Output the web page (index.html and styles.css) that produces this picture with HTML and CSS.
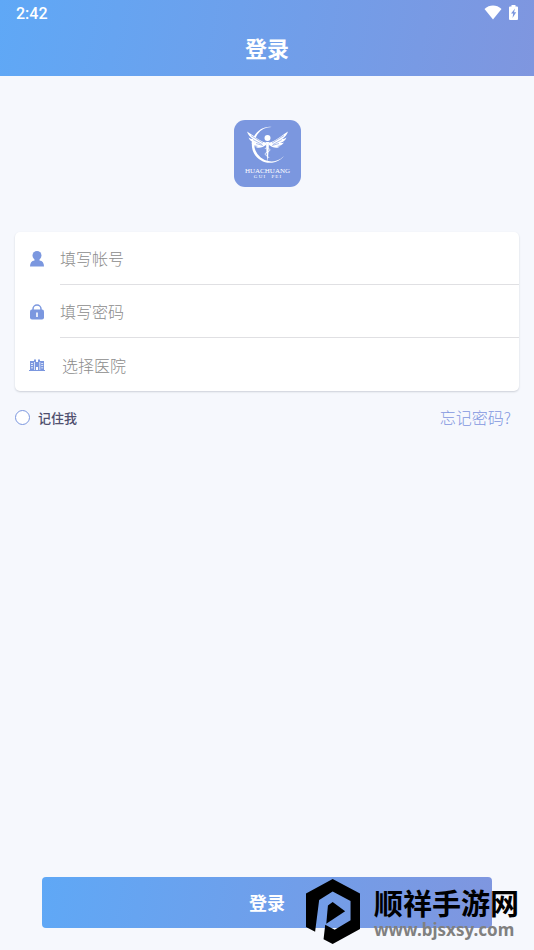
FILE: index.html
```html
<!DOCTYPE html>
<html lang="zh-CN">
<head>
    <meta charset="UTF-8">
    <meta name="viewport" content="width=device-width, initial-scale=1.0">
    <title>登录</title>
    <link rel="stylesheet" href="styles.css">
</head>
<body>

<header class="header">
    <div class="status-bar">
        <span class="clock">2:42</span>
        <svg class="wifi" viewBox="0 0 18 15" aria-hidden="true">
            <path d="M0.5 4C3 1.6 6 0.5 9 0.5S15 1.6 17.5 4L9 14.5Z" fill="#fff"/>
        </svg>
        <svg class="battery" viewBox="0 0 9 15" aria-hidden="true">
            <path d="M2.5 0h4v1.5H8a1 1 0 0 1 1 1V14a1 1 0 0 1-1 1H1a1 1 0 0 1-1-1V2.5a1 1 0 0 1 1-1h1.5Z" fill="#fff"/>
            <path d="M6 3.5 2 8.6h2.2L3.5 13 7.2 7.2H5Z" fill="#7b97df"/>
        </svg>
    </div>
    <h1 class="title">登录</h1>
</header>

<form class="login">
    <svg class="logo" viewBox="0 0 67 67" role="img" aria-label="HUACHUANG GUI PEI">
        <rect width="67" height="67" rx="11" fill="#7b97df"/>
        <path d="M38 7A18 18 0 1 0 50 36A17.2 17.2 0 1 1 38 7Z" fill="#fff"/>
        <g fill="#fff">
            <circle cx="33.5" cy="18" r="3"/>
            <path d="M32 22.5C27 22 23 18 13 11.5C14 15 16 17 19 19C17.5 19 16 18.5 14.5 17.5C15.5 20.5 18 22 21 23C19.5 23.3 18.5 23 17 22.5C18.5 25 21 26 24 26C23 26.5 22 26.5 21 26.5C24 29 29 27.5 32 25Z"/>
            <path d="M35 22.5C40 22 44 18 54 11.5C53 15 51 17 48 19C49.5 19 51 18.5 52.5 17.5C51.5 20.5 49 22 46 23C47.5 23.3 48.5 23 50 22.5C48.5 25 46 26 43 26C44 26.5 45 26.5 46 26.5C43 29 38 27.5 35 25Z"/>
            <path d="M32 22h3l-.5 10-1 10-1-10Z"/>
        </g>
        <g stroke="#7b97df" stroke-width=".6" fill="none">
            <path d="M17 15.5 29 23M19 19.5l9 5M22 23.5l7 2M50 15.5 38 23M48 19.5l-9 5M45 23.5l-7 2"/>
        </g>
        <path d="M31 29c0-2 5-1 5 1s-5 2-5 4 4 2 4 4" fill="none" stroke="#fff" stroke-width=".7"/>
        <text class="logo-name" x="33.5" y="53" text-anchor="middle">HUACHUANG</text>
        <text class="logo-sub" x="33.5" y="58" text-anchor="middle">G U I &#160; &#160; P E I</text>
    </svg>

    <div class="card">
        <div class="row">
            <label class="icon" for="account" aria-label="帐号">
                <svg viewBox="0 0 16 16">
                    <circle cx="8" cy="4.5" r="4.5"/>
                    <path d="M5.5 8h5v1.5c3 .4 4.5 2.5 4.5 6H1c0-3.5 1.5-5.6 4.5-6Z"/>
                </svg>
            </label>
            <input id="account" class="field" type="text" placeholder="填写帐号">
        </div>
        <div class="row">
            <label class="icon" for="password" aria-label="密码">
                <svg viewBox="0 0 16 16">
                    <path d="M4 7V5a4 4 0 0 1 8 0v2" fill="none" stroke="#7b97df" stroke-width="1.5"/>
                    <rect x="1" y="5.5" width="14" height="10" rx="2"/>
                    <path d="M7.2 8.5h1.6V13H7.2Z" fill="#fff"/>
                </svg>
            </label>
            <input id="password" class="field" type="password" placeholder="填写密码">
        </div>
        <div class="row">
            <label class="icon" for="hospital" aria-label="医院">
                <svg viewBox="0 0 16 16">
                    <path d="M1 4h4V2.5h2V5h2V2.5h2V4h4v9h1v1H0v-1h1Z"/>
                    <path d="M5 5h.7v8H5ZM10.500 5h.7v8h-.7ZM7 10h2v3H7ZM2 6h2v.7H2ZM2 8.2h2v.7H2ZM2 10.5h2v.7H2ZM12.2 6h2v.7h-2ZM12.2 8.2h2v.7h-2ZM12.2 10.5h2v.7h-2Z" fill="#fff"/>
                </svg>
            </label>
            <select id="hospital" class="field picker">
                <option>选择医院</option>
            </select>
        </div>
    </div>

    <div class="options">
        <label class="remember">
            <input class="check" type="checkbox">
            <span>记住我</span>
        </label>
        <a class="forgot" href="#">忘记密码?</a>
    </div>

    <button class="submit" type="submit">登录</button>
</form>

<aside class="watermark">
    <svg class="mark" viewBox="0 0 160 192" aria-hidden="true">
        <path d="M79 0 160 43V148L79 192 52 178 57 135 85 150 132 122V65L79 37 39 62 27 156 0 142V43Z" fill="#000"/>
        <path d="M65 78 79 68 116 95 60 132Z" fill="#000"/>
    </svg>
    <div class="mark-text">
        <div class="mark-name">顺祥手游网</div>
        <div class="mark-url">www.bjsxsy.com</div>
    </div>
</aside>

</body>
</html>
```
FILE: styles.css
```css
* {
    box-sizing: border-box;
}
body {
    margin: 0;
    min-height: 100vh;
    display: flex;
    flex-direction: column;
    background-color: #f6f8fd;
    font-family: "Noto Sans CJK SC", sans-serif;
}
.header {
    height: 76px;
    background: linear-gradient(100deg, #5fa8f6, #7f96df);
    color: #fff;
}
.status-bar {
    display: flex;
    align-items: center;
    height: 25px;
    padding: 0 16px;
}
.clock {
    flex: 1;
    padding-top: 3px;
    font: 500 16px/24px Roboto, sans-serif;
}
.wifi {
    width: 18px;
    height: 15px;
    margin-right: 7px;
}
.battery {
    width: 9px;
    height: 15px;
}
.title {
    margin: 0;
    text-align: center;
    font-size: 22px;
    line-height: 44px;
    font-weight: 700;
}
.login {
    flex: 1;
    display: flex;
    flex-direction: column;
    padding: 44px 15px 22px;
}
.logo {
    width: 67px;
    height: 67px;
    align-self: center;
    margin-bottom: 45px;
}
.logo-name {
    font: 7px "Liberation Serif", serif;
    fill: #fff;
}
.logo-sub {
    font: 5px "Liberation Serif", serif;
    fill: #fff;
}
.card {
    border-radius: 5px;
    background-color: #fff;
    box-shadow: 0 1px 2px #ccd0d8;
}
.row {
    display: flex;
    align-items: center;
    padding-left: 14px;
}
.icon {
    width: 16px;
    height: 16px;
    margin-right: 15px;
}
.icon svg {
    display: block;
    fill: #7b97df;
}
.field {
    flex: 1;
    min-width: 0;
    height: 53px;
    padding: 0;
    border: 0;
    border-bottom: 1px solid #e0e0e3;
    background: none;
    color: #8c8c8c;
    font: 300 16px "Noto Sans CJK SC", sans-serif;
    outline: none;
}
.field::placeholder {
    color: #8c8c8c;
}
.picker {
    padding-left: 2px;
    border-bottom: 0;
    appearance: none;
}
.options {
    display: flex;
    justify-content: space-between;
    align-items: center;
    margin-top: 14px;
    padding-right: 8px;
}
.remember {
    display: flex;
    align-items: center;
    gap: 8px;
    color: #50506f;
    font-size: 13px;
    font-weight: 500;
}
.check {
    appearance: none;
    width: 15px;
    height: 15px;
    margin: 0;
    border: 1px solid #7b97df;
    border-radius: 50%;
    background-color: #fff;
}
.check:checked {
    background-color: #7b97df;
}
.forgot {
    color: #7f96df;
    font-size: 16px;
    font-weight: 300;
    text-decoration: none;
}
.submit {
    height: 51px;
    margin: auto 27px 0;
    padding: 0 0 2px;
    border: 0;
    border-radius: 4px;
    background: linear-gradient(100deg, #5fa8f6, #7f96df);
    color: #fff;
    font: 700 18px "Noto Sans CJK SC", sans-serif;
}
.watermark {
    position: absolute;
    right: 15px;
    bottom: 6px;
    display: flex;
    align-items: center;
    gap: 14px;
    pointer-events: none;
}
.mark {
    width: 54px;
    height: 65px;
}
.mark-text {
    padding-top: 3px;
}
.mark-name {
    color: #000;
    font-size: 29px;
    line-height: 32px;
    font-weight: 700;
}
.mark-url {
    margin-top: 2px;
    color: #808080;
    font: bold 17px/20px "Noto Sans", sans-serif;
}
```
